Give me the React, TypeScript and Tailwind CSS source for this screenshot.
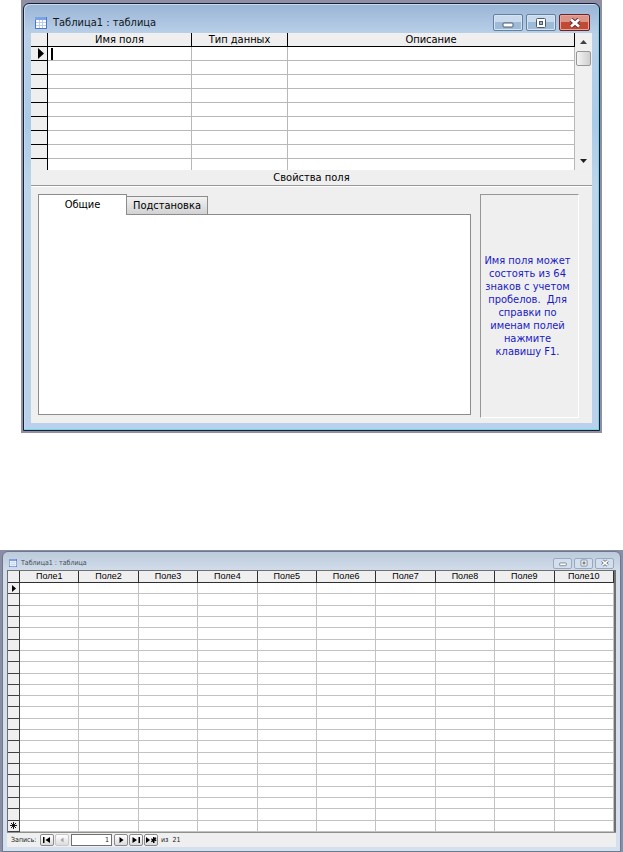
import { useState } from 'react'

const designRows = [0, 1, 2, 3, 4, 5, 6, 7, 8]
const sheetColumns = [1, 2, 3, 4, 5, 6, 7, 8, 9, 10]
const sheetRows = Array.from({ length: 22 }, (_, i) => i)

function TableIcon({ className }: { className: string }) {
  return (
    <svg className={className} viewBox="0 0 12 12" aria-hidden="true">
      <rect x="0" y="0" width="12" height="12" fill="#4a78c8" />
      <rect x="0" y="0" width="11" height="3" fill="#7ba2e4" />
      <rect x="1" y="3" width="10" height="8" fill="#ffffff" />
      <path d="M1 5.5h10M1 8.5h10M4.5 3v8M7.5 3v8" stroke="#b9cdf0" strokeWidth="1" />
    </svg>
  )
}

function CaptionGlyph({ kind, light }: { kind: 'min' | 'max' | 'close'; light?: boolean }) {
  const edge = light ? '#56616f' : '#4c5a6b'
  return (
    <svg className={light ? 'h-2 w-2' : 'h-3 w-3'} viewBox="0 0 12 12" aria-hidden="true">
      {kind === 'min' && <rect x="1" y="6" width="10" height="4" rx="1" fill="#fff" stroke={edge} />}
      {kind === 'max' && (
        <>
          <rect x="1.5" y="1.5" width="9" height="9" rx="1" fill="#fff" stroke={edge} />
          <rect x="4.5" y="4.5" width="3" height="3" fill="#9fb6d0" stroke={edge} />
        </>
      )}
      {kind === 'close' && (
        <>
          <path d="M2 2.5l8 7M10 2.5l-8 7" stroke={light ? edge : '#6b3030'} strokeWidth="4.6" />
          <path d="M2 2.5l8 7M10 2.5l-8 7" stroke="#fff" strokeWidth="2.6" />
        </>
      )}
    </svg>
  )
}

function DesignWindow() {
  const [tab, setTab] = useState('general')

  return (
    <section className="mx-[21px] bg-[#918fa5] px-0.5 pt-[3px] pb-0.5">
      <div className="rounded-t-md border border-[#14202e] bg-[linear-gradient(to_bottom,#99b4d5_0,#bad0e9_30px,#a9cbe8_120px,#bcd5ea_180px,#b9d1ea_100%)] px-[7px] pb-[7px] shadow-[inset_-1px_-1px_0_#72d5ea,inset_1px_1px_0_#c9dcf0]">
        {/* Title bar */}
        <header className="flex h-[29px] items-center pt-2 pl-1">
          <TableIcon className="h-3 w-3" />
          <h1 className="ml-1.5 flex-1 text-[11px] leading-4 whitespace-nowrap text-[#101820]">Таблица1 : таблица</h1>
          <div className="flex gap-[3px] pr-0.5">
            <button
              aria-label="Свернуть"
              className="flex h-[17px] w-[30px] items-center justify-center rounded-xs border border-[#62809f] bg-linear-to-b from-[#c8daec] from-50% to-[#9dbbd8] to-50% shadow-[inset_0_0_0_1px_#d6e4f2]"
            >
              <CaptionGlyph kind="min" />
            </button>
            <button
              aria-label="Развернуть"
              className="flex h-[17px] w-[30px] items-center justify-center rounded-xs border border-[#62809f] bg-linear-to-b from-[#c8daec] from-50% to-[#9dbbd8] to-50% shadow-[inset_0_0_0_1px_#d6e4f2]"
            >
              <CaptionGlyph kind="max" />
            </button>
            <button
              aria-label="Закрыть"
              className="flex h-[17px] w-[31px] items-center justify-center rounded-xs border border-[#6b2323] bg-linear-to-b from-[#dd9488] from-50% to-[#c24a35] to-50% shadow-[inset_0_0_0_1px_#e5a79c]"
            >
              <CaptionGlyph kind="close" />
            </button>
          </div>
        </header>

        <div className="bg-[#efefef]">
          {/* Field list */}
          <div className="flex h-[137px] overflow-hidden">
            <table className="h-[140px] flex-1 table-fixed border-separate border-spacing-0 bg-white text-[11px] leading-3">
              <colgroup>
                <col className="w-[17px]" />
                <col className="w-[144px]" />
                <col className="w-[96px]" />
                <col />
              </colgroup>
              <thead>
                <tr className="h-[14px] bg-[#efefef]">
                  <th className="border-r border-b border-black p-0" />
                  <th className="border-r border-b border-black p-0 font-normal">Имя поля</th>
                  <th className="border-r border-b border-black p-0 font-normal">Тип данных</th>
                  <th className="border-r border-b border-black p-0 font-normal">Описание</th>
                </tr>
              </thead>
              <tbody>
                {designRows.map((row) => (
                  <tr key={row} className="h-[14px]">
                    <td className="border-r border-b border-black bg-[#efefef] p-0">
                      {row === 0 && (
                        <svg className="ml-[7px] h-[11px] w-1.5" viewBox="0 0 6 11" aria-hidden="true">
                          <path d="M0 0L6 5.5L0 11Z" />
                        </svg>
                      )}
                    </td>
                    <td className="border-r border-b border-[#b8b8b8] p-0">
                      {row === 0 && <div className="ml-[3px] h-3 w-0.5 bg-black" />}
                    </td>
                    <td className="border-r border-b border-[#b8b8b8] p-0" />
                    <td className="border-r border-b border-[#b8b8b8] p-0" />
                  </tr>
                ))}
              </tbody>
            </table>

            {/* Scrollbar */}
            <div className="flex w-[17px] flex-col items-center bg-[#f0f0f0]">
              <svg className="mt-[7px] h-1 w-[7px]" viewBox="0 0 7 4" aria-hidden="true">
                <path d="M0 4L3.5 0L7 4Z" fill="#404040" />
              </svg>
              <div className="mt-[7px] h-[15px] w-[15px] rounded-xs border border-[#979797] bg-linear-to-r from-[#f4f4f4] to-[#cfcfcf]" />
              <svg className="mt-auto mb-[7px] h-1 w-[7px]" viewBox="0 0 7 4" aria-hidden="true">
                <path d="M0 0L3.5 4L7 0Z" fill="#202020" />
              </svg>
            </div>
          </div>

          <h2 className="h-4 border-b border-[#979797] text-center text-[11px] leading-4">Свойства поля</h2>

          {/* Field properties */}
          <div className="flex gap-[9px] border-t border-white pt-[7px] pr-[13px] pb-[5px] pl-[7px]">
            <div className="mb-[3px] flex-1">
              <div role="tablist" className="flex h-5 items-end text-[11px] leading-4">
                <button
                  role="tab"
                  aria-selected={tab === 'general'}
                  onClick={() => setTab('general')}
                  className="z-10 -mb-px h-[21px] w-[89px] border border-b-0 border-[#8c8c8c] bg-white"
                >
                  Общие
                </button>
                <button
                  role="tab"
                  aria-selected={tab === 'lookup'}
                  onClick={() => setTab('lookup')}
                  className="h-[18px] w-[81px] border border-b-0 border-l-0 border-[#8c8c8c] bg-linear-to-b from-[#f2f2f2] to-[#d2d2d4]"
                >
                  Подстановка
                </button>
              </div>
              <div role="tabpanel" className="h-[201px] border border-[#8c8c8c] bg-white" />
            </div>
            <aside className="flex w-[99px] items-center border border-t-[#979797] border-r-white border-b-white border-l-[#979797] pr-1">
              <p className="w-full text-center text-[11px] leading-[13px] whitespace-pre text-[#1a1ac4]">
                {'Имя поля может\nсостоять из 64\nзнаков с учетом\nпробелов.  Для\nсправки по\nименам полей\nнажмите\nклавишу F1.'}
              </p>
            </aside>
          </div>
        </div>
      </div>
    </section>
  )
}

function NavButton({ label, path, muted }: { label: string; path: string; muted?: boolean }) {
  return (
    <button
      aria-label={label}
      disabled={muted}
      className="flex h-3 w-[14px] items-center justify-center rounded-xs border border-[#8a8a8a] bg-linear-to-b from-white to-[#dcdcdc] disabled:border-[#c8c8c8]"
    >
      <svg className="h-2 w-3" viewBox="0 0 12 8" aria-hidden="true">
        <path d={path} fill={muted ? '#a0a0a0' : '#000'} />
      </svg>
    </button>
  )
}

function DatasheetWindow() {
  const [record, setRecord] = useState('1')

  return (
    <section className="mt-[117px] bg-[#8a8da3] p-0.5 pt-px">
      <div className="rounded-t-md border border-[#6c7a90] bg-[linear-gradient(to_bottom,#bccadb_0,#d3deeb_20px,#d5e0ee_100%)] px-1 pb-1">
        <header className="flex h-[18px] items-center pt-1 pl-0.5">
          <TableIcon className="h-2 w-2" />
          <h1 className="ml-1 flex-1 text-[7px] leading-3 whitespace-nowrap text-[#404a56]">Таблица1 : таблица</h1>
          <div className="flex gap-0.5 pr-0.5">
            {(['min', 'max', 'close'] as const).map((kind) => (
              <button
                key={kind}
                aria-label={kind === 'min' ? 'Свернуть' : kind === 'max' ? 'Развернуть' : 'Закрыть'}
                className="flex h-[11px] w-[19px] items-center justify-center rounded-xs border border-[#9aaabd] bg-[#d3dfed]"
              >
                <CaptionGlyph kind={kind} light />
              </button>
            ))}
          </div>
        </header>

        {/* Records */}
        <div className="bg-[#efefef]">
          <table className="h-[262px] w-full table-fixed border-separate border-spacing-0 border-t border-r-2 border-l border-[#707070] bg-white font-['Liberation_Sans'] text-[9px] leading-[11px]">
            <colgroup>
              <col className="w-3" />
              {sheetColumns.map((n) => (
                <col key={n} />
              ))}
            </colgroup>
            <thead>
              <tr className="h-3 bg-[#efefef]">
                <th className="border-r border-b border-[#303030] p-0" />
                {sheetColumns.map((n) => (
                  <th key={n} className="border-r border-b border-[#303030] p-0 font-normal">
                    Поле{n}
                  </th>
                ))}
              </tr>
            </thead>
            <tbody className="leading-none">
              {sheetRows.map((row) => (
                <tr key={row} className="h-[11px]">
                  <td className="border-r border-b border-[#404040] bg-[#efefef] p-0">
                    {row === 0 && (
                      <svg className="mx-auto h-[7px] w-1" viewBox="0 0 4 7" aria-hidden="true">
                        <path d="M0 0L4 3.5L0 7Z" />
                      </svg>
                    )}
                    {row === 21 && (
                      <svg className="mx-auto h-[7px] w-[7px]" viewBox="0 0 7 7" aria-hidden="true">
                        <path d="M3.5 0v7M0 3.5h7M1 1l5 5M6 1l-5 5" stroke="#000" strokeWidth="0.9" />
                      </svg>
                    )}
                  </td>
                  {sheetColumns.map((n) => (
                    <td key={n} className="border-r border-b border-[#c2c2c2] p-0" />
                  ))}
                </tr>
              ))}
            </tbody>
          </table>

          {/* Record navigation */}
          <footer className="flex h-[15px] items-center gap-px border-t border-[#909090] pl-1 text-[7px] leading-3 text-[#202020]">
            <label htmlFor="record" className="w-7 whitespace-nowrap">
              Запись:
            </label>
            <NavButton label="Первая запись" path="M2 1h1.5v6H2zM9 1v6L4.5 4z" />
            <NavButton label="Предыдущая запись" path="M7.5 1.5v5L4.5 4z" muted />
            <input
              id="record"
              value={record}
              onChange={(e) => setRecord(e.target.value)}
              className="mx-px h-3 w-[41px] border border-[#707070] bg-white pr-0.5 text-right outline-none"
            />
            <NavButton label="Следующая запись" path="M4.5 1v6L8.5 4z" />
            <NavButton label="Последняя запись" path="M2.5 1v6L7 4zM8.5 1H10v6H8.5z" />
            <NavButton label="Новая запись" path="M1 1v6L5 4zM8 1h1.5v1.2l1.3-.9.7 1-1.2 1 1.3.7-.7 1.2-1.4-.7V7H8V5.5l-1.4.7L6 5l1.3-.8L6 3.3l.7-1 1.3.9z" />
            <span className="ml-0.5 whitespace-pre">{'из  21'}</span>
          </footer>
        </div>
      </div>
    </section>
  )
}

export default function App() {
  return (
    <main className="bg-white font-['DejaVu_Sans_Condensed','Noto_Sans',sans-serif] text-black">
      <DesignWindow />
      <DatasheetWindow />
    </main>
  )
}
